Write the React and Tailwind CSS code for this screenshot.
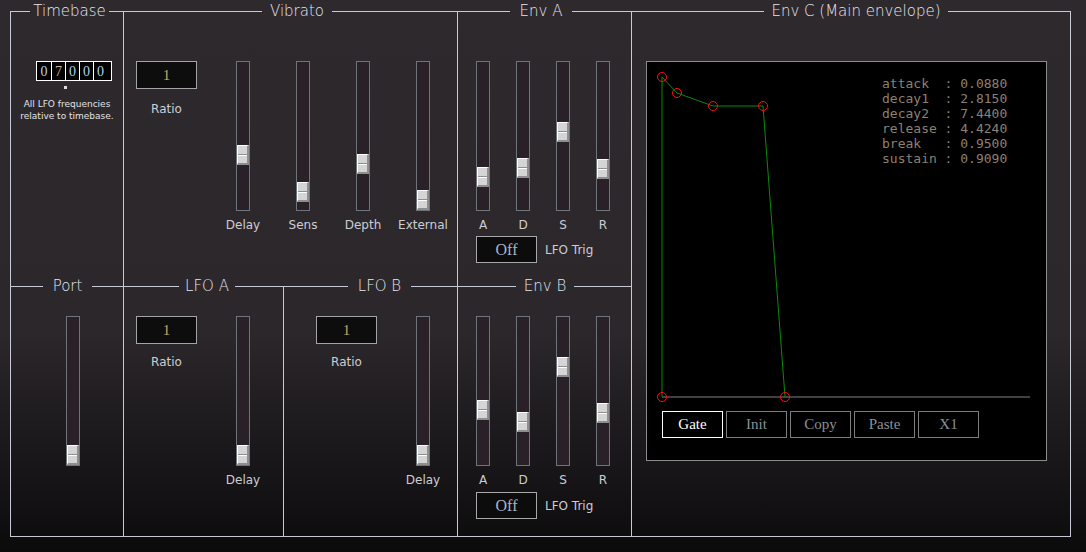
import React from 'react';

const vibrato = [
    ['Delay', 84],
    ['Sens', 121],
    ['Depth', 93],
    ['External', 129],
];
const envA = [
    ['A', 106],
    ['D', 97],
    ['S', 61],
    ['R', 98],
];
const envB = [
    ['A', 84],
    ['D', 96],
    ['S', 41],
    ['R', 87],
];
const envValues = [
    ['attack  ', '0.0880'],
    ['decay1  ', '2.8150'],
    ['decay2  ', '7.4400'],
    ['release ', '4.4240'],
    ['break   ', '0.9500'],
    ['sustain ', '0.9090'],
];

const Group = ({ title, className, legendClass, children }) => (
    <fieldset className={`border-[#c8c9d6] ${className}`}>
        <legend className={`text-[15px] leading-[20px] font-extralight text-[#e6e6ee] ${legendClass}`}>
            <div className="flex justify-center">{title}</div>
        </legend>
        {children}
    </fieldset>
);

const Slider = ({ pos }) => (
    <div className="relative h-[150px] w-[14px] shrink-0 border border-[#6d747a] bg-[#2a2128]">
        <div
            className="absolute left-0 flex h-[20px] w-[12px] flex-col border-t border-l border-r-2 border-b-2 border-t-white border-l-white border-r-[#8e8e8e] border-b-[#8e8e8e] bg-[#d5d5d5]"
            style={{ top: pos - 1 }}
        >
            <div className="mt-[8px] h-px bg-[#8e8e8e]" />
            <div className="h-px bg-white" />
        </div>
    </div>
);

const SliderCol = ({ label, pos, className }) => (
    <div className={`flex flex-col items-center ${className}`}>
        <Slider pos={pos} />
        {label && (
            <div className="mt-[6px] text-[12px] leading-[16px] text-[#cdcdd2]">
                {label}
            </div>
        )}
    </div>
);

const RatioBox = ({ labelClass }) => (
    <div className="flex w-[61px] shrink-0 flex-col items-center">
        <div className="flex h-[28px] w-[61px] items-center justify-center border border-[#a4a4a4] bg-[#0d0d0d] font-['Liberation_Serif',serif] text-[15px] text-[#c9a463]">
            1
        </div>
        <div className={`text-[12px] leading-[16px] text-[#cdcdd2] ${labelClass}`}>
            Ratio
        </div>
    </div>
);

const LfoTrig = ({ className }) => (
    <div className={`ml-[18px] flex items-center ${className}`}>
        <div className="flex h-[27px] w-[61px] items-center justify-center border border-[#a8a8a8] bg-[#0c0c0c] font-['Liberation_Serif',serif] text-[16px] text-[#aab6c4]">
            Off
        </div>
        <div className="ml-[8px] text-[12px] text-[#cdcdd2]">LFO Trig</div>
    </div>
);

const Envelope = () => (
    <div className="ml-[14px] mt-[40px] flex h-[400px] w-[401px] flex-col border border-[#8c8c8c] bg-black">
        <div className="relative h-[349px] w-full">
            <svg className="absolute inset-0" width="399" height="349">
                <line x1="15" y1="335" x2="383" y2="335" stroke="#808080" strokeWidth="1" />
                <polyline
                    points="15,335 15,15 30,31 66,44 116,44 138,335"
                    fill="none"
                    stroke="#0a8a0a"
                    strokeWidth="1"
                />
                {[
                    [15, 15],
                    [30, 31],
                    [66, 44],
                    [116, 44],
                    [15, 335],
                    [138, 335],
                ].map(([x, y]) => (
                    <circle key={`${x}-${y}`} cx={x} cy={y} r="4.5" fill="none" stroke="#ff1010" strokeWidth="1" />
                ))}
            </svg>
            <div className="absolute left-[235px] top-[14px] whitespace-pre font-['DejaVu_Sans_Mono',monospace] text-[13px] leading-[15px] text-[#8c8172]">
                {envValues.map(([k, v]) => (
                    <div key={k}>{`${k}: ${v}`}</div>
                ))}
            </div>
        </div>
        <div className="ml-[15px] flex gap-[3px] font-['Liberation_Serif',serif] text-[15px]">
            <div className="flex h-[27px] w-[61px] items-center justify-center border border-white text-white">
                Gate
            </div>
            {['Init', 'Copy', 'Paste', 'X1'].map((b) => (
                <div
                    key={b}
                    className="flex h-[27px] w-[61px] items-center justify-center border border-[#7c7c7c] text-[#8a9098]"
                >
                    {b}
                </div>
            ))}
        </div>
    </div>
);

const App = () => {
    const digits = ['0', '7', '0', '0', '0'];
    return (
        <div className="flex h-[552px] w-[1086px] overflow-hidden bg-[linear-gradient(180deg,#2d292d_0%,#2b272b_60%,#0c0b0c_100%)] pl-[10px] pt-[1px] font-['DejaVu_Sans',sans-serif]">
            <div className="flex w-[621px] flex-col">
                <div className="flex h-[285px]">
                    <Group title="Timebase" className="h-full w-[113px] border-l border-t" legendClass="ml-[19px] w-[79px]">
                        <div className="flex flex-col">
                            <div className="ml-[25px] mt-[40px] flex h-[20px] w-[76px] border border-white bg-black font-['Liberation_Serif',serif] text-[14px]">
                                {digits.map((d, i) => (
                                    <div
                                        key={i}
                                        className={`flex w-[14px] items-center justify-center ${i > 0 ? 'border-l border-white' : ''} ${d === '7' ? 'text-[#d4b888]' : 'text-[#b4d0ec]'}`}
                                    >
                                        {d}
                                    </div>
                                ))}
                            </div>
                            <div className="ml-[53px] mt-[5px] h-[3px] w-[3px] bg-[#dcdcdc]" />
                            <div className="mt-[9px] text-center text-[9px] leading-[12px] text-[#e2e2e6]">
                                All LFO frequencies
                                <br />
                                relative to timebase.
                            </div>
                        </div>
                    </Group>
                    <Group title="Vibrato" className="h-full w-[334px] border-l border-t" legendClass="ml-[138px] w-[70px]">
                        <div className="flex pl-[12px] pt-[40px]">
                            <RatioBox labelClass="mt-[12px]" />
                            <div className="ml-[16px] flex">
                                {vibrato.map(([l, p]) => (
                                    <SliderCol key={l} label={l} pos={p} className="w-[60px]" />
                                ))}
                            </div>
                        </div>
                    </Group>
                    <Group title="Env A" className="h-full w-[174px] border-l border-t" legendClass="ml-[52px] w-[62px]">
                        <div className="flex flex-col pt-[40px]">
                            <div className="flex pl-[5px]">
                                {envA.map(([l, p]) => (
                                    <SliderCol key={l} label={l} pos={p} className="w-[40px]" />
                                ))}
                            </div>
                            <LfoTrig className="mt-[3px]" />
                        </div>
                    </Group>
                </div>
                <div className="-mt-[10px] flex h-[261px]">
                    <Group title="Port" className="h-full w-[113px] border-l border-t border-b" legendClass="ml-[32px] w-[49px]">
                        <div className="ml-[55px] mt-[20px]">
                            <Slider pos={129} />
                        </div>
                    </Group>
                    <Group title="LFO A" className="h-full w-[160px] border-l border-t border-b" legendClass="ml-[55px] w-[56px]">
                        <div className="flex pl-[12px] pt-[20px]">
                            <RatioBox labelClass="mt-[10px]" />
                            <SliderCol label="Delay" pos={129} className="ml-[16px] w-[60px]" />
                        </div>
                    </Group>
                    <Group title="LFO B" className="h-full w-[174px] border-l border-t border-b" legendClass="ml-[64px] w-[63px]">
                        <div className="flex pl-[32px] pt-[20px]">
                            <RatioBox labelClass="mt-[10px]" />
                            <SliderCol label="Delay" pos={129} className="ml-[16px] w-[60px]" />
                        </div>
                    </Group>
                    <Group title="Env B" className="h-full w-[174px] border-l border-t border-b" legendClass="ml-[58px] w-[58px]">
                        <div className="flex flex-col pt-[20px]">
                            <div className="flex pl-[5px]">
                                {envB.map(([l, p]) => (
                                    <SliderCol key={l} label={l} pos={p} className="w-[40px]" />
                                ))}
                            </div>
                            <LfoTrig className="mt-[4px]" />
                        </div>
                    </Group>
                </div>
            </div>
            <Group title="Env C (Main envelope)" className="h-[536px] w-[440px] border" legendClass="ml-[132px] w-[184px]">
                <Envelope />
            </Group>
        </div>
    );
};

export default App;
